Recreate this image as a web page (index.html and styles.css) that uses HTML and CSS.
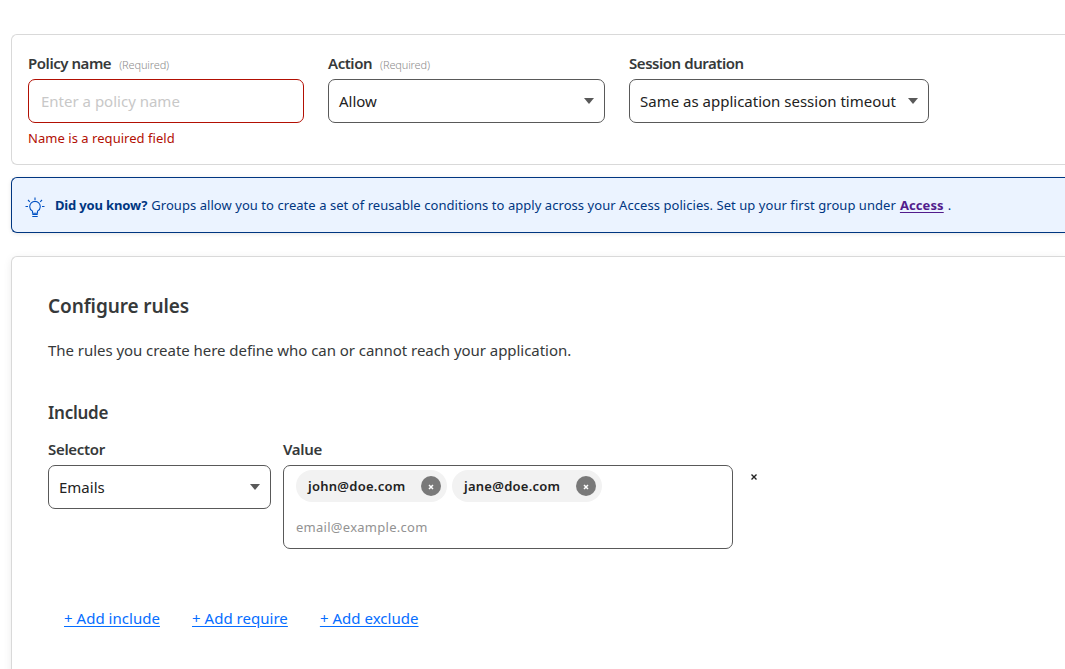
FILE: index.html
```html
<!DOCTYPE html>
<html lang="en">
<head>
<meta charset="utf-8">
<title>Add policy</title>
<link rel="stylesheet" href="styles.css">
</head>
<body>
<main class="page">
  <section class="card policy">
    <div class="field name">
      <label class="label"><b>Policy name</b><small>(Required)</small></label>
      <div class="control invalid"><span class="placeholder">Enter a policy name</span></div>
      <p class="error">Name is a required field</p>
    </div>
    <div class="field action">
      <label class="label"><b>Action</b><small>(Required)</small></label>
      <div class="control"><span>Allow</span><svg class="caret" viewBox="0 0 10 6"><path d="M0 0h10L5 6z"/></svg></div>
    </div>
    <div class="field session">
      <label class="label"><b>Session duration</b></label>
      <div class="control"><span>Same as application session timeout</span><svg class="caret" viewBox="0 0 10 6"><path d="M0 0h10L5 6z"/></svg></div>
    </div>
  </section>
  <aside class="notice">
    <svg class="bulb" viewBox="0 0 20 20"><path d="M7.500 16.300v-2.200C5.800 13.100 4.700 11.600 4.700 9.700a5.300 5.300 0 0 1 10.600 0c0 1.900-1.100 3.400-2.800 4.400v2.200zM7.300 17.500h5.400M7.300 19.500h5.400M10 .5v2.500M.5 9.500h2.500M17 9.500h2.500M3 3l1.800 1.800M17 3l-1.800 1.800"/></svg>
    <p class="tip"><b>Did you know?</b><span class="tip-text">Groups allow you to create a set of reusable conditions to apply across your Access policies. Set up your first group under</span><a href="#">Access</a><span>.</span></p>
  </aside>
  <section class="card rules">
    <h2>Configure rules</h2>
    <p class="intro">The rules you create here define who can or cannot reach your application.</p>
    <h3>Include</h3>
    <div class="rule">
      <div class="field selector">
        <label class="label"><b>Selector</b></label>
        <div class="control"><span>Emails</span><svg class="caret" viewBox="0 0 10 6"><path d="M0 0h10L5 6z"/></svg></div>
      </div>
      <div class="field value">
        <label class="label"><b>Value</b></label>
        <div class="control tags">
          <div class="chips">
            <span class="chip"><b>john@doe.com</b><i class="x"><svg viewBox="0 0 6 6"><path d="M1 1l4 4M5 1L1 5"/></svg></i></span>
            <span class="chip"><b>jane@doe.com</b><i class="x"><svg viewBox="0 0 6 6"><path d="M1 1l4 4M5 1L1 5"/></svg></i></span>
          </div>
          <span class="hint">email@example.com</span>
        </div>
      </div>
      <svg class="remove" viewBox="0 0 6 6"><path d="M.5.500l5 5M5.500.500l-5 5"/></svg>
    </div>
    <nav class="links"><a href="#">+ Add include</a><a href="#">+ Add require</a><a href="#">+ Add exclude</a></nav>
  </section>
</main>
</body>
</html>
```
FILE: styles.css
```css
* { box-sizing: border-box; }
body { margin: 0; background: #fff; color: #36393a; font-family: "Noto Sans", sans-serif; font-size: 15px; white-space: nowrap; }
h2, h3, p { margin: 0; }
.page { height: 669px; overflow: hidden; padding: 34px 0 0 11px; }
.card { background: #fff; border: 1px solid #d9d9d9; border-right: 0; border-radius: 6px 0 0 6px; }
.policy { display: flex; gap: 24px; height: 131px; padding: 18px 16px; }
.field { display: flex; flex-direction: column; flex-shrink: 0; }
.name { width: 276px; }
.action { width: 277px; }
.session { width: 300px; }
.label { display: flex; align-items: baseline; gap: 8px; height: 26px; flex-shrink: 0; line-height: 20px; font-size: 15px; }
.label b { font-weight: 600; letter-spacing: -.45px; }
.label small { font-size: 11px; font-weight: 300; letter-spacing: -.15px; color: #8d8d8d; }
.control { height: 44px; flex-shrink: 0; border: 1px solid #595959; border-radius: 7px; display: flex; align-items: center; justify-content: space-between; padding: 0 10px; color: #222; background: #fff; }
.invalid { border-color: #b20f03; padding-left: 12px; }
.placeholder { color: #c8c8c8; }
.caret { width: 10px; height: 6px; fill: #595959; }
.error { color: #b20f03; font-size: 13px; letter-spacing: .04px; line-height: 20px; margin-top: 5px; }
.notice { display: flex; align-items: center; height: 56px; margin-top: 12px; padding-left: 13px; border: 1px solid #003681; border-right: 0; border-radius: 6px 0 0 6px; background: #ebf3ff; color: #003681; box-shadow: 0 1px 4px rgba(0, 0, 0, .1); }
.bulb { width: 20px; height: 20px; flex-shrink: 0; margin: 4px 10px 0 0; fill: none; stroke: #0051c3; stroke-width: 1.1; }
.tip { display: flex; gap: 4px; font-size: 13px; line-height: 20px; }
.tip b { font-weight: 700; letter-spacing: -.16px; }
.tip-text { letter-spacing: .052px; }
.tip a { color: #521c8c; font-weight: 700; letter-spacing: .1px; text-underline-offset: 2px; }
.rules { height: 440px; margin-top: 23px; padding: 35px 36px; box-shadow: 0 2px 8px rgba(0, 0, 0, .08); }
h2 { font-size: 19px; font-weight: 600; letter-spacing: -.1px; line-height: 28px; }
.intro { letter-spacing: -.045px; line-height: 24px; margin-top: 18px; }
h3 { font-size: 17px; font-weight: 600; letter-spacing: -.25px; line-height: 24px; margin-top: 39px; }
.rule { display: flex; gap: 12px; margin-top: 14px; }
.rule .label b { letter-spacing: -.3px; }
.selector { width: 223px; }
.value { width: 450px; }
.tags { height: 84px; padding: 4px 12px 0; flex-direction: column; align-items: flex-start; justify-content: flex-start; }
.chips { display: flex; gap: 5px; }
.chip { display: flex; align-items: center; justify-content: space-between; height: 32px; width: 151px; padding: 0 6px 0 12px; border-radius: 16px; background: #f2f2f2; font-size: 13px; }
.chip + .chip { width: 150px; }
.chip b { font-weight: 600; letter-spacing: .26px; }
.x { display: flex; align-items: center; justify-content: center; width: 20px; height: 20px; border-radius: 50%; background: #797979; }
.x svg { width: 6px; height: 6px; margin-top: 2px; stroke: #fff; stroke-width: 1.5; }
.hint { color: #929292; font-size: 13px; letter-spacing: .27px; line-height: 20px; margin-top: 15px; }
.remove { width: 6px; height: 6px; flex-shrink: 0; margin: 35px 0 0 6px; stroke: #222; stroke-width: 1.4; }
.links { display: flex; gap: 32px; margin: 57px 0 0 16px; line-height: 24px; }
.links a { color: #056dff; letter-spacing: .03px; text-underline-offset: 2px; }
```
